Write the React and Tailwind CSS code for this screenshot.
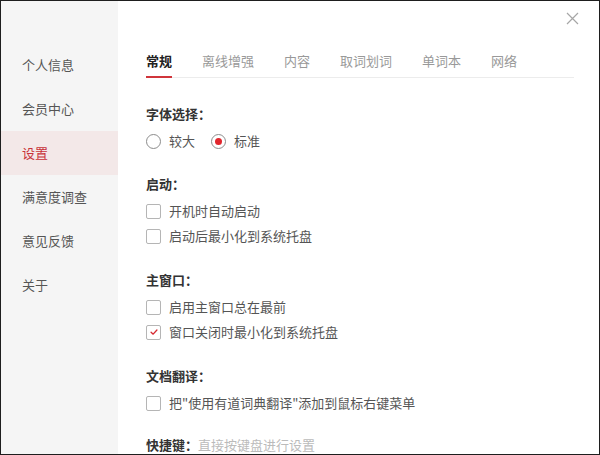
import { useState } from 'react';

const FONT = { fontFamily: '"Noto Sans CJK SC", "Noto Sans", sans-serif' };

const menuItems = ['个人信息', '会员中心', '设置', '满意度调查', '意见反馈', '关于'];
const tabs = ['常规', '离线增强', '内容', '取词划词', '单词本', '网络'];

const Radio = ({ checked, label, onClick }) => (
  <button type="button" onClick={onClick} className="flex items-center cursor-pointer">
    <span className="w-[15px] h-[15px] rounded-full border border-[#8c8c8c] flex items-center justify-center bg-white">
      {checked && <span className="w-[7px] h-[7px] rounded-full bg-[#e1262d]" />}
    </span>
    <span className="ml-[8px] text-[13px] text-[#555]">{label}</span>
  </button>
);

const Checkbox = ({ checked, label, onClick }) => (
  <button type="button" onClick={onClick} className="flex items-center cursor-pointer h-[20px]">
    <span className="w-[15px] h-[15px] rounded-[2px] border border-[#b5b5b5] bg-white flex items-center justify-center">
      {checked && (
        <svg viewBox="0 0 12 12" className="w-[10px] h-[10px]" fill="none" stroke="#d62a32" strokeWidth="1.6" strokeLinecap="round" strokeLinejoin="round">
          <path d="M2.5 6.3 L5 8.6 L9.5 3.6" />
        </svg>
      )}
    </span>
    <span className="ml-[8px] text-[13px] text-[#555]">{label}</span>
  </button>
);

const Heading = ({ children, className = '' }) => (
  <div className={`h-[20px] flex items-center text-[13px] font-bold text-[#333] ${className}`}>{children}</div>
);

export default function App() {
  const [menu, setMenu] = useState('设置');
  const [tab, setTab] = useState('常规');
  const [font, setFont] = useState('标准');
  const [opts, setOpts] = useState({
    autoStart: false,
    startMin: false,
    onTop: false,
    closeMin: true,
    docMenu: false,
  });
  const toggle = key => setOpts(o => ({ ...o, [key]: !o[key] }));

  return (
    <div style={FONT} className="w-[600px] h-[455px] border border-[#1e1e1e] bg-white flex overflow-hidden relative">
      {/* Sidebar */}
      <div className="w-[117px] bg-[#f5f5f5] pt-[42px] flex flex-col shrink-0">
        {menuItems.map(item => (
          <button
            key={item}
            type="button"
            onClick={() => setMenu(item)}
            className={`h-[44px] flex items-center pl-[21px] text-[13px] text-left ${
              menu === item ? 'bg-[#f3e8e8] text-[#c8323a]' : 'text-[#555]'
            }`}
          >
            {item}
          </button>
        ))}
      </div>

      {/* Main */}
      <div className="flex-1 pl-[28px] pr-[25px]">
        <div className="flex border-b border-[#ececec] mt-[51px] gap-[30px]">
          {tabs.map(t => (
            <button
              key={t}
              type="button"
              onClick={() => setTab(t)}
              className={`h-[26px] pb-[8px] text-[13px] leading-[18px] border-b-2 -mb-px ${
                tab === t ? 'font-bold text-[#222] border-[#d0353b]' : 'text-[#999] border-transparent'
              }`}
            >
              {t}
            </button>
          ))}
        </div>

        <Heading className="mt-[26px]">字体选择：</Heading>
        <div className="flex items-center gap-[16px] mt-[7px] h-[20px]">
          <Radio checked={font === '较大'} label="较大" onClick={() => setFont('较大')} />
          <Radio checked={font === '标准'} label="标准" onClick={() => setFont('标准')} />
        </div>

        <Heading className="mt-[23px]">启动：</Heading>
        <div className="mt-[7px] flex flex-col gap-[5px]">
          <Checkbox checked={opts.autoStart} label="开机时自动启动" onClick={() => toggle('autoStart')} />
          <Checkbox checked={opts.startMin} label="启动后最小化到系统托盘" onClick={() => toggle('startMin')} />
        </div>

        <Heading className="mt-[24px]">主窗口：</Heading>
        <div className="mt-[7px] flex flex-col gap-[5px]">
          <Checkbox checked={opts.onTop} label="启用主窗口总在最前" onClick={() => toggle('onTop')} />
          <Checkbox checked={opts.closeMin} label="窗口关闭时最小化到系统托盘" onClick={() => toggle('closeMin')} />
        </div>

        <Heading className="mt-[24px]">文档翻译：</Heading>
        <div className="mt-[7px]">
          <Checkbox checked={opts.docMenu} label={'把"使用有道词典翻译"添加到鼠标右键菜单'} onClick={() => toggle('docMenu')} />
        </div>

        <Heading className="mt-[22px]">
          快捷键：<span className="font-normal text-[#bbb]">直接按键盘进行设置</span>
        </Heading>
      </div>

      {/* Close */}
      <button type="button" className="absolute top-[11px] right-[20px] w-[13px] h-[13px]">
        <svg viewBox="0 0 13 13" className="w-[13px] h-[13px]" stroke="#a6a6a6" strokeWidth="1.2" fill="none">
          <path d="M1 1 L12 12 M12 1 L1 12" />
        </svg>
      </button>
    </div>
  );
}
